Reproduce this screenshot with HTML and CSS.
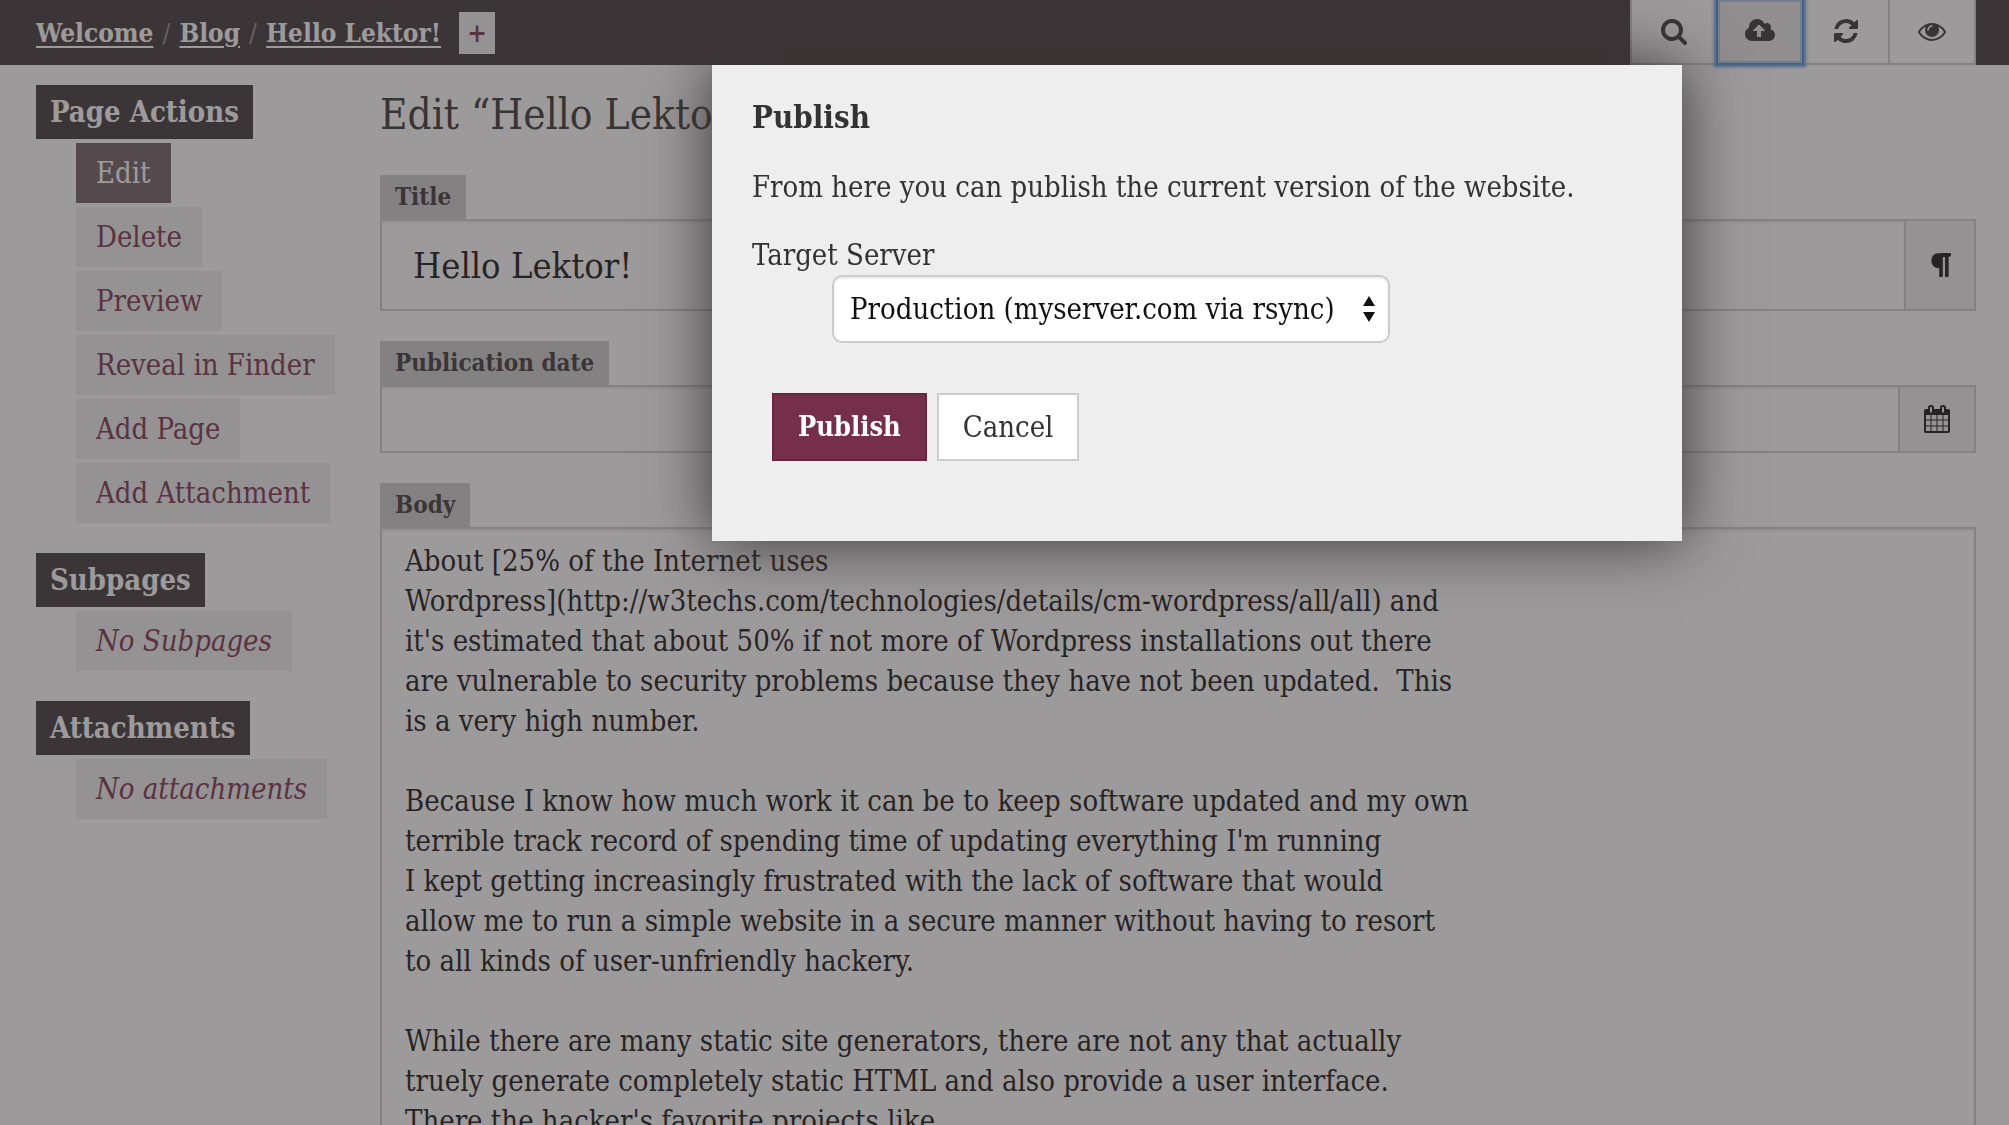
FILE: index.html
```html
<!DOCTYPE html>
<html lang="en">
<head>
<meta charset="utf-8">
<title>Edit “Hello Lektor!”</title>
<meta name="viewport" content="width=device-width, initial-scale=1">
<link rel="stylesheet" href="styles.css">
</head>
<body class="modal-open">
<header class="topbar">
  <nav class="breadcrumbs" aria-label="Breadcrumb">
    <a href="#">Welcome</a><span class="sep">∕</span><a href="#">Blog</a><span class="sep">∕</span><a href="#">Hello Lektor!</a>
    <button class="add" type="button">+</button>
  </nav>
  <div class="toolbar">
    <button type="button" aria-label="Find"><svg class="icon" viewBox="0 0 1664 1792"><path d="M1152 832q0-185-131.500-316.500t-316.500-131.500-316.500 131.500-131.500 316.500 131.500 316.500 316.500 131.500 316.500-131.500 131.500-316.500zm512 832q0 52-38 90t-90 38q-54 0-90-38l-343-342q-179 124-399 124-143 0-273.500-55.500t-225-150-150-225-55.500-273.500 55.500-273.500 150-225 225-150 273.500-55.500 273.500 55.500 225 150 150 225 55.500 273.500q0 220-124 399l343 343q37 37 37 90z"/></svg></button>
    <button class="current" type="button" aria-label="Publish"><svg class="icon" viewBox="0 0 1920 1792"><path d="M1280 864q0-14-9-23l-352-352q-9-9-23-9t-23 9l-351 351q-10 12-10 24 0 14 9 23t23 9h224v352q0 13 9.500 22.500t22.500 9.500h192q13 0 22.500-9.500t9.500-22.500v-352h224q13 0 22.500-9.500t9.500-22.500zm640 288q0 159-112.500 271.500t-271.500 112.500h-1088q-185 0-316.500-131.500t-131.500-316.500q0-130 70-240t188-165q-2-30-2-43 0-212 150-362t362-150q156 0 285.500 87t188.500 231q71-62 166-62 106 0 181 75t75 181q0 76-41 138 130 31 213.500 135.500t83.500 238.500z"/></svg></button>
    <button type="button" aria-label="Refresh"><svg class="icon" viewBox="0 0 1536 1792"><path d="M1511 1056q0 5-1 7-64 268-268 434.500t-478 166.500q-146 0-282.500-55t-243.500-157l-129 129q-19 19-45 19t-45-19-19-45v-448q0-26 19-45t45-19h448q26 0 45 19t19 45-19 45l-137 137q71 66 161 102t187 36q134 0 250-65t186-179q11-17 53-117 8-23 30-23h192q13 0 22.500 9.500t9.500 22.500zm25-800v448q0 26-19 45t-45 19h-448q-26 0-45-19t-19-45 19-45l138-138q-148-137-349-137-134 0-250 65t-186 179q-11 17-53 117-8 23-30 23h-199q-13 0-22.500-9.500t-9.500-22.500v-7q65-268 270-434.500t480-166.500q146 0 284 55.500t245 156.500l130-129q19-19 45-19t45 19 19 45z"/></svg></button>
    <button type="button" aria-label="View site"><svg class="icon" viewBox="0 0 1792 1792"><path d="M1664 960q-152-236-381-353 61 104 61 225 0 185-131.500 316.500t-316.500 131.500-316.500-131.500-131.500-316.500q0-121 61-225-229 117-381 353 133 205 333.500 326.500t434.500 121.500 434.500-121.500 333.500-326.500zm-720-384q0-20-14-34t-34-14q-125 0-214.500 89.500t-89.500 214.500q0 20 14 34t34 14 34-14 14-34q0-86 61-147t147-61q20 0 34-14t14-34zm848 384q0 34-20 69-140 230-376.500 368.500t-499.500 138.500-499.500-139-376.500-368q-20-35-20-69t20-69q140-229 376.500-368t499.500-139 499.500 139 376.500 368q20 35 20 69z"/></svg></button>
  </div>
</header>

<div class="layout">
  <aside class="sidebar">
    <section>
      <h3>Page Actions</h3>
      <ul>
        <li><a class="active" href="#">Edit</a></li>
        <li><a href="#">Delete</a></li>
        <li><a href="#">Preview</a></li>
        <li><a href="#">Reveal in Finder</a></li>
        <li><a href="#">Add Page</a></li>
        <li><a href="#">Add Attachment</a></li>
      </ul>
    </section>
    <section>
      <h3>Subpages</h3>
      <ul><li><em>No Subpages</em></li></ul>
    </section>
    <section>
      <h3>Attachments</h3>
      <ul><li><em>No attachments</em></li></ul>
    </section>
  </aside>

  <main class="editor">
    <h2>Edit “Hello Lektor!”</h2>
    <div class="field">
      <label for="title">Title</label>
      <div class="group">
        <input class="large" id="title" type="text" value="Hello Lektor!">
        <span class="addon"><svg class="icon" viewBox="0 0 1664 1792"><path d="M1534 189v73q0 29-18.500 61t-42.500 32q-50 0-54 1-26 6-32 31-3 11-3 64v1152q0 25-18 43t-43 18h-108q-25 0-43-18t-18-43v-1218h-143v1218q0 25-17.500 43t-43.500 18h-108q-26 0-43.500-18t-17.500-43v-496q-147-12-245-59-126-58-192-179-64-117-64-259 0-166 88-286 88-118 209-159 111-37 417-37h479q25 0 43 18t18 43z"/></svg></span>
      </div>
    </div>
    <div class="field">
      <label for="date">Publication date</label>
      <div class="group">
        <input id="date" type="text">
        <span class="addon wide"><svg class="icon" viewBox="0 0 1792 1792"><path d="M192 1664h288v-288h-288v288zm352 0h320v-288h-320v288zm-352-352h288v-320h-288v320zm352 0h320v-320h-320v320zm-352-384h288v-288h-288v288zm736 736h320v-288h-320v288zm-384-736h320v-288h-320v288zm768 736h288v-288h-288v288zm-384-352h320v-320h-320v320zm-352-864v-288q0-13-9.500-22.500t-22.500-9.500h-64q-13 0-22.500 9.500t-9.500 22.500v288q0 13 9.500 22.500t22.500 9.500h64q13 0 22.500-9.500t9.500-22.500zm736 864h288v-320h-288v320zm-384-384h320v-288h-320v288zm384 0h288v-288h-288v288zm32-480v-288q0-13-9.500-22.500t-22.500-9.500h-64q-13 0-22.500 9.500t-9.500 22.500v288q0 13 9.500 22.500t22.500 9.500h64q13 0 22.500-9.500t9.500-22.500zm384-64v1280q0 52-38 90t-90 38h-1408q-52 0-90-38t-38-90v-1280q0-52 38-90t90-38h128v-96q0-66 47-113t113-47h64q66 0 113 47t47 113v96h384v-96q0-66 47-113t113-47h64q66 0 113 47t47 113v96h128q52 0 90 38t38 90z"/></svg></span>
      </div>
    </div>
    <div class="field">
      <label for="body">Body</label>
      <textarea id="body" rows="15" spellcheck="false">About [25% of the Internet uses
Wordpress](http://w3techs.com/technologies/details/cm-wordpress/all/all) and
it's estimated that about 50% if not more of Wordpress installations out there
are vulnerable to security problems because they have not been updated.  This
is a very high number.

Because I know how much work it can be to keep software updated and my own
terrible track record of spending time of updating everything I'm running
I kept getting increasingly frustrated with the lack of software that would
allow me to run a simple website in a secure manner without having to resort
to all kinds of user-unfriendly hackery.

While there are many static site generators, there are not any that actually
truely generate completely static HTML and also provide a user interface.
There the hacker's favorite projects like</textarea>
    </div>
  </main>
</div>

<div class="overlay">
  <div class="dialog" role="dialog" aria-modal="true" aria-labelledby="dialog-title">
    <h3 id="dialog-title">Publish</h3>
    <p>From here you can publish the current version of the website.</p>
    <label for="target">Target Server</label>
    <div class="select">
      <select id="target"><option>Production (myserver.com via rsync)</option></select>
      <svg class="arrows" viewBox="0 0 12 26"><path d="M0 10L6 0l6 10zM0 16h12L6 26z"/></svg>
    </div>
    <div class="actions">
      <button class="primary" type="button">Publish</button>
      <button type="button">Cancel</button>
    </div>
  </div>
</div>
</body>
</html>
```
FILE: styles.css
```css
*, *::before, *::after { box-sizing: border-box; }

body {
  margin: 0;
  background: #fff;
  color: #333;
  font-family: "Roboto Slab", "DejaVu Serif Condensed", "DejaVu Serif", serif;
  font-size: 29px;
  line-height: 40px;
}
.modal-open { height: 100vh; overflow: hidden; }

button, input, select, textarea { font: inherit; color: inherit; border-radius: 0; margin: 0; }
h2, h3, p, ul { margin: 0; padding: 0; }
ul { list-style: none; }
.icon { height: 28px; fill: currentColor; display: block; }

.topbar {
  display: flex;
  justify-content: space-between;
  height: 65px;
  padding: 0 33px 0 36px;
  background: #3c3537;
}
.breadcrumbs { display: flex; align-items: center; font-size: 26px; font-weight: bold; }
.breadcrumbs a { color: #fff; text-decoration-thickness: 2px; text-underline-offset: 4px; }
.sep { width: 26px; text-align: center; color: #96898d; font-weight: normal; }
.add {
  width: 36px;
  height: 42px;
  margin-left: 18px;
  padding: 0;
  border: 0;
  background: #eee;
  color: #782f49;
  font-weight: bold;
}
.toolbar { display: flex; }
.toolbar button {
  display: flex;
  align-items: center;
  justify-content: center;
  width: 88px;
  padding: 0 0 2px;
  margin-left: -2px;
  border: 2px solid #ccc;
  border-top: 0;
  background: #fff;
}
.toolbar .current {
  z-index: 1;
  background: #e6e6e6;
  border-color: #558dc8;
  box-shadow: 0 0 0 2px #84b4e8, 0 0 4px 2px #84b4e8, inset 0 0 0 2px #a9c7e6;
}

.layout { display: flex; padding: 0 33px 0 36px; }
.sidebar { flex: 0 0 344px; padding-top: 20px; }
.sidebar section { margin-bottom: 30px; }
.sidebar h3 {
  width: fit-content;
  padding: 7px 14px;
  background: #3c3537;
  color: #fff;
  font-size: 29px;
}
.sidebar ul { display: grid; justify-items: start; gap: 4px; margin: 4px 0 0 40px; }
.sidebar li { display: block; }
.sidebar li a, .sidebar li em {
  display: block;
  padding: 10px 20px;
  background: #eee;
  color: #782f49;
  text-decoration: none;
}
.sidebar li .active { background: #6c5f63; color: #fff; }

.editor { flex: 1; min-width: 0; padding-top: 20px; }
.editor h2 { margin-bottom: 30px; font-size: 42px; font-weight: normal; line-height: 60px; }
.field { margin-bottom: 30px; }
.field label {
  display: block;
  width: fit-content;
  padding: 2px 15px;
  background: #ccc;
  color: #3c3537;
  font-size: 24px;
  font-weight: bold;
}
.group { display: flex; border: 2px solid #ccc; }
.group input {
  flex: 1;
  min-width: 0;
  height: 64px;
  padding: 0 24px;
  border: 0;
  background: #fff;
  box-shadow: inset 0 2px 2px rgba(0, 0, 0, .08);
  color: #111;
}
.group .large { height: 88px; padding: 0 31px; font-size: 36px; }
.addon {
  display: flex;
  align-items: center;
  justify-content: center;
  width: 70px;
  border-left: 2px solid #ccc;
  background: #eee;
  color: #111;
}
.wide { width: 76px; }
textarea {
  display: block;
  width: 100%;
  padding: 12px 23px;
  border: 2px solid #ccc;
  background: #fff;
  box-shadow: inset 0 2px 2px rgba(0, 0, 0, .08);
  color: #111;
  resize: none;
  overflow: hidden;
}
.field textarea { color: #111; }

.overlay {
  position: fixed;
  inset: 0;
  z-index: 10;
  display: grid;
  grid-template-columns: 712fr 970fr 327fr;
  align-items: start;
  padding-top: 65px;
  background: rgba(60, 53, 55, .5);
}
.dialog {
  grid-column: 2;
  padding: 32px 40px 80px;
  background: #eee;
  box-shadow: 0 0 60px #3c3537;
}
.dialog h3 { margin-bottom: 30px; font-size: 31px; }
.dialog p { margin-bottom: 28px; }
.dialog label { display: block; }
.select { position: relative; width: fit-content; margin-left: 80px; }
.select select {
  appearance: none;
  width: 558px;
  height: 68px;
  padding: 0 16px;
  border: 2px solid #ccc;
  border-radius: 10px;
  background: #fff;
  box-shadow: inset 0 2px 2px rgba(0, 0, 0, .08);
  color: #111;
}
.arrows { position: absolute; right: 15px; top: 21px; width: 12px; height: 26px; fill: #111; }
.actions { display: flex; gap: 10px; margin: 50px 0 0 20px; }
.actions button {
  height: 68px;
  padding: 0 24px;
  border: 2px solid #ccc;
  background: #fff;
}
.actions .primary { border-color: #69273f; background: #752f49; color: #fff; font-size: 27px; font-weight: bold; }
```
